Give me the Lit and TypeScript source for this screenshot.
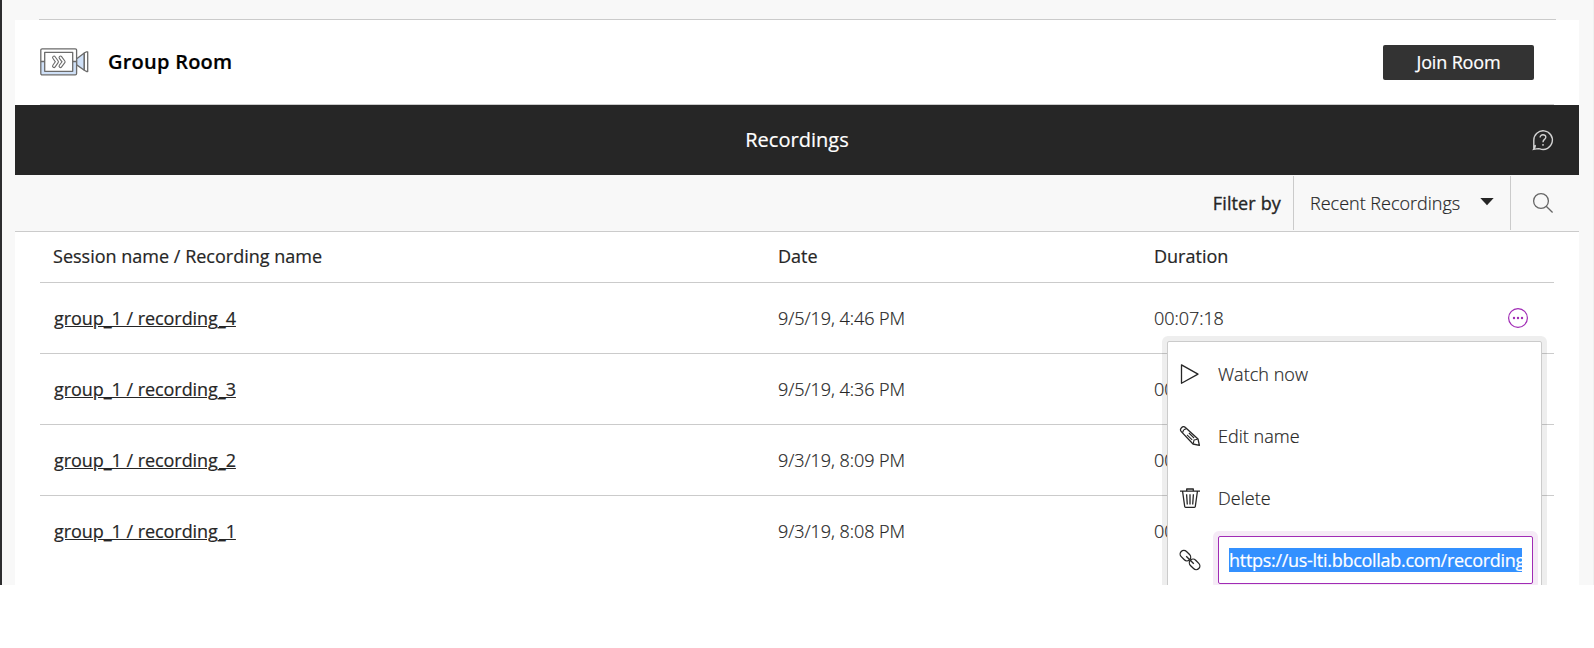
import { LitElement, html, css, svg } from "lit";
import { customElement, property } from "lit/decorators.js";

const icons = {
  play: svg`<path d="M1.5 .9v18.4L18 10.1z" />`,
  pencil: svg`<path d="M1.300 5.600C0 4.300 .3 2.900 1.500 1.700 2.700 .5 4.100 .2 5.400 1.500L18 13 19.400 19.400 13 18z" /><path d="M2.600 6.600Q3 3.400 6.300 2.800M7 8.800l5.200 5M8.900 7l5.200 5M13.300 17.600l.7-3.600 3.600-.7" stroke-width="1.100" />`,
  trash: svg`<path d="M0 3.200h20M6.700 3V1h6.600v2M2.600 3.500 4.700 18.500q.1.800.9.800h8.800q.8 0 .9-.8L17.400 3.500M6.600 6.300l.7 10.200M10 6.300v10.200M13.400 6.300l-.7 10.200" />`,
  link: svg`<rect x="-.5" y="1.900" width="11.800" height="7.400" rx="3.700" transform="rotate(45 5.400 5.600)" /><rect x="8.700" y="10.700" width="11.800" height="7.400" rx="3.700" transform="rotate(45 14.600 14.400)" /><path d="M6.200 6.200l7.600 7.600" />`,
};

@customElement("menu-entry")
class MenuEntry extends LitElement {
  @property() icon: keyof typeof icons = "play";

  static styles = css`
    :host {
      display: flex;
      align-items: center;
      height: 62px;
      padding-left: 12px;
    }
    .glyph {
      width: 20px;
      height: 20px;
      margin-right: 18px;
      flex: none;
      overflow: visible;
      fill: none;
      stroke: #262626;
      stroke-width: 1.3;
      stroke-linejoin: round;
    }
  `;

  render() {
    return html`<svg class="glyph" viewBox="0 0 20 20">${icons[this.icon]}</svg><slot></slot>`;
  }
}

@customElement("app-root")
class AppRoot extends LitElement {
  private rows = [
    { name: "group_1 / recording_4", date: "9/5/19, 4:46 PM", duration: "00:07:18" },
    { name: "group_1 / recording_3", date: "9/5/19, 4:36 PM", duration: "00:06:42" },
    { name: "group_1 / recording_2", date: "9/3/19, 8:09 PM", duration: "00:05:10" },
    { name: "group_1 / recording_1", date: "9/3/19, 8:08 PM", duration: "00:01:03" },
  ];

  static styles = css`
    :host {
      display: block;
      height: 648px;
      overflow: hidden;
      background: #fff;
      color: #262626;
      font: 300 18px/24px "Open Sans", sans-serif;
      -webkit-text-stroke: 0.2px currentColor;
    }
    * {
      box-sizing: border-box;
    }
    .page {
      position: relative;
      height: 585px;
      overflow: hidden;
      background: #f8f8f8;
      border-left: 2px solid #2d2d2f;
      border-right: 1px solid #f0f0f0;
      padding: 19px 14px 0 13px;
    }
    .rule {
      height: 1px;
      margin: 0 23px 0 24px;
      background: #cbcbcb;
    }
    .sheet {
      height: 566px;
      background: #fff;
    }
    .room {
      display: flex;
      align-items: center;
      height: 84px;
      padding: 0 45px 0 25px;
    }
    .camera {
      width: 49px;
      height: 28px;
      margin-right: 19px;
    }
    .title {
      flex: 1;
      margin: 0;
      color: #000;
      font-size: 20px;
      font-weight: 600;
      letter-spacing: 0.24px;
    }
    .join {
      width: 151px;
      height: 35px;
      padding: 0;
      border: 0;
      border-radius: 2px;
      background: #333;
      color: #fff;
      font: 400 18px/34px "Open Sans", sans-serif;
      letter-spacing: -0.15px;
    }
    .inner {
      margin: 0 25px;
    }
    .bar {
      display: grid;
      grid-template-columns: 1fr auto 1fr;
      align-items: center;
      height: 70px;
      padding: 0 26px;
      background: #262626;
      color: #fff;
      font-size: 20px;
      font-weight: 400;
      letter-spacing: 0.04px;
    }
    .bar-title {
      grid-column: 2;
    }
    .help {
      justify-self: end;
      width: 20px;
      height: 20px;
      fill: none;
      stroke: #d2d2d2;
      stroke-width: 1.4;
      overflow: visible;
    }
    .filter {
      display: flex;
      justify-content: flex-end;
      height: 57px;
      padding-top: 1px;
      background: #f8f8f8;
      border-bottom: 1px solid #cbcbcb;
    }
    .label {
      padding: 15px 12px 0 0;
      font-weight: 400;
      letter-spacing: 0.14px;
      -webkit-text-stroke-width: 0.35px;
    }
    .select {
      display: flex;
      width: 218px;
      height: 54px;
      padding: 15px 16px 0 16px;
      border: solid #cbcbcb;
      border-width: 0 1px;
      justify-content: space-between;
    }
    .caret {
      width: 14px;
      height: 8px;
      margin-top: 7px;
      fill: #262626;
    }
    .search {
      width: 20px;
      height: 20px;
      margin: 17px 26px 0 22px;
      fill: none;
      stroke: #666;
      stroke-width: 1.3;
      overflow: visible;
    }
    .row {
      display: grid;
      grid-template-columns: 725px 376px 1fr 20px;
      align-items: center;
      height: 71px;
      margin: 0 25px;
      padding: 0 26px 1px 13px;
      border-bottom: 1px solid #cbcbcb;
      letter-spacing: -0.05px;
    }
    .row:last-child {
      border: 0;
    }
    .head {
      height: 51px;
      padding-bottom: 2px;
      font-weight: 400;
      letter-spacing: 0.01px;
    }
    .name {
      color: #262626;
      font-weight: 400;
      text-decoration: underline;
      padding-left: 1px;
    }
    .more {
      width: 20px;
      height: 20px;
      fill: none;
      stroke: #a02bb5;
      overflow: visible;
    }
    .dot {
      fill: #a02bb5;
      stroke: none;
    }
    .menu {
      position: absolute;
      left: 1165px;
      top: 341px;
      width: 375px;
      height: 300px;
      padding-top: 1px;
      background: #fff;
      border: 1px solid #cbcbcb;
      border-radius: 2px;
      box-shadow: 0 0 0 5px rgba(38, 38, 38, 0.08);
      letter-spacing: 0.04px;
    }
    .field {
      width: 315px;
      height: 48px;
      padding: 11px 10px;
      border: 1px solid #a02bb5;
      border-radius: 2px;
      box-shadow: 0 0 0 5px #f5eaf6;
      background: #fff;
    }
    .selected {
      overflow: hidden;
      white-space: nowrap;
      background: #3390ff;
      color: #fff;
      font-weight: 400;
      letter-spacing: -0.29px;
    }
  `;

  render() {
    return html`
      <div class="page">
        <div class="rule"></div>
        <main class="sheet">
          <header class="room">
            <svg class="camera" viewBox="0 0 49 28" fill="none" stroke="#6b6b6b" stroke-width="1.300" stroke-linejoin="round">
              <path d="M1 14h36v11.200a1.300 1.300 0 0 1-1.300 1.300H2.300A1.300 1.300 0 0 1 1 25.200z" fill="#cfe0f7" stroke="none" />
              <rect x=".8" y=".8" width="35.800" height="26" rx="1.300" />
              <rect x="4.700" y="4.300" width="28" height="19" fill="#fff" />
              <path d="M.8 13.500h4M32.700 13.500h3.900" />
              <path d="M36.700 10.700 44.300 5v17.200l-7.600-5.300z" fill="#cfe0f7" />
              <path d="M44.300 5l2.200-1.200h1.200v19.700h-1.200l-2.200-1.300z" fill="#fff" />
              <g stroke-width="3.900" stroke-linecap="round"><path id="a" d="M14 9.500l3 4.300-3 4.300M20.500 9.500l3.200 4.300-3.200 4.300" /></g>
              <g stroke="#fff" stroke-width="1.700" stroke-linecap="round"><path d="M14 9.500l3 4.300-3 4.300M20.500 9.500l3.200 4.300-3.200 4.300" /></g>
            </svg>
            <h1 class="title">Group Room</h1>
            <button class="join">Join Room</button>
          </header>
          <div class="rule inner"></div>
          <div class="bar">
            <span class="bar-title">Recordings</span>
            <svg class="help" viewBox="0 0 20 20">
              <path d="M.8 19.300V10.200A9.300 9.300 0 1 1 7 18.900C5 18.200 3.500 19.100.8 19.300Q2.700 17.200 2.200 15" />
              <path d="M7.100 7.500C7 3.800 13 3.900 12.800 7.300 12.700 9.500 10 9.300 10 12.200M10 14v1.700" />
            </svg>
          </div>
          <div class="filter">
            <span class="label">Filter by</span>
            <div class="select">
              <span>Recent Recordings</span>
              <svg class="caret" viewBox="0 0 14 8"><path d="M.3 0h13.400L7 7.300z" /></svg>
            </div>
            <svg class="search" viewBox="0 0 20 20"><circle cx="8" cy="8" r="7.400" /><path d="M13.200 13.200l6.400 6.300" /></svg>
          </div>
          <div class="row head"><span>Session name / Recording name</span><span>Date</span><span>Duration</span></div>
          ${this.rows.map(
            (r, i) => html`<div class="row">
              <a class="name">${r.name}</a><span>${r.date}</span><span>${r.duration}</span>
              ${i === 0
                ? html`<svg class="more" viewBox="0 0 20 20"><circle cx="10" cy="10" r="9.400" stroke-width="1.200" /><g class="dot"><circle cx="6" cy="10" r="1.200" /><circle cx="10" cy="10" r="1.200" /><circle cx="14" cy="10" r="1.200" /></g></svg>`
                : null}
            </div>`
          )}
        </main>
        <div class="menu">
          <menu-entry icon="play">Watch now</menu-entry>
          <menu-entry icon="pencil">Edit name</menu-entry>
          <menu-entry icon="trash">Delete</menu-entry>
          <menu-entry icon="link"><div class="field"><div class="selected">https://us-lti.bbcollab.com/recording</div></div></menu-entry>
        </div>
      </div>
    `;
  }
}
